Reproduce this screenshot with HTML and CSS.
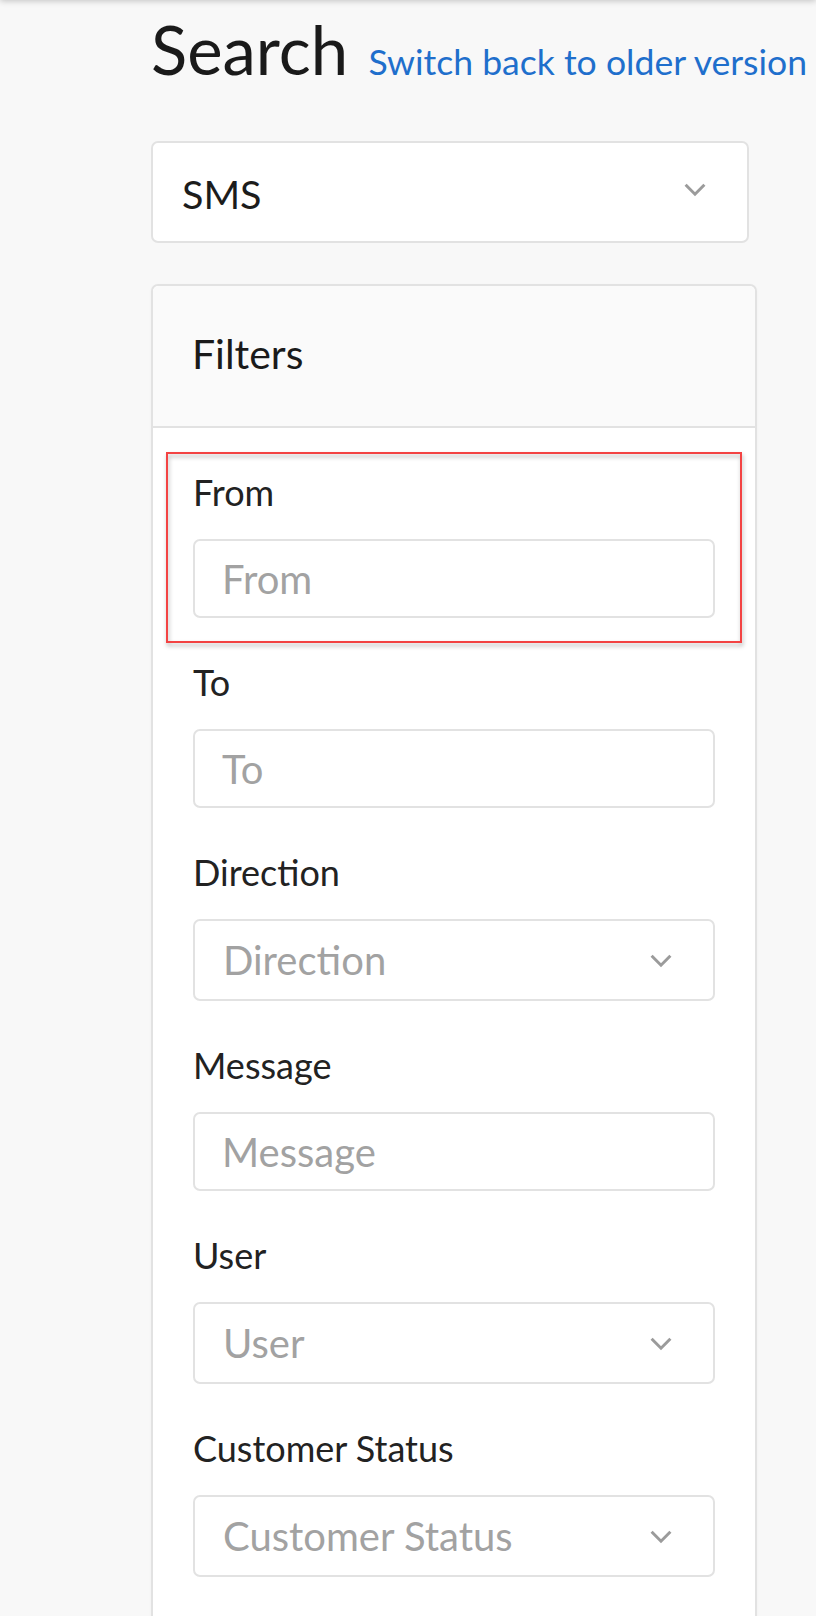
FILE: index.html
```html
<!DOCTYPE html>
<html lang="en">
<head>
<meta charset="utf-8">
<title>Search</title>
<link rel="stylesheet" href="styles.css">
</head>
<body>
<div class="topbar"></div>
<main class="page">
  <h1 class="title">Search <a class="switch-link" href="#">Switch back to older version</a></h1>

  <div class="type-select">
    <span class="type-value">SMS</span>
    <svg class="chevron" width="22" height="14" viewBox="0 0 22 14"><polyline points="1.6,1.8 11,11.2 20.4,1.8" fill="none" stroke="#9b9b9b" stroke-width="3"/></svg>
  </div>

  <section class="card">
    <div class="card-header">Filters</div>
    <div class="card-body">
      <div class="group">
        <div class="highlight"></div>
        <label class="label">From</label>
        <div class="input"><span class="placeholder">From</span></div>
      </div>
      <div class="group">
        <label class="label">To</label>
        <div class="input"><span class="placeholder">To</span></div>
      </div>
      <div class="group">
        <label class="label">Direction</label>
        <div class="select"><span class="placeholder">Direction</span>
          <svg class="chevron" width="22" height="14" viewBox="0 0 22 14"><polyline points="1.6,1.8 11,11.2 20.4,1.8" fill="none" stroke="#9b9b9b" stroke-width="3"/></svg>
        </div>
      </div>
      <div class="group">
        <label class="label">Message</label>
        <div class="input"><span class="placeholder">Message</span></div>
      </div>
      <div class="group">
        <label class="label">User</label>
        <div class="select"><span class="placeholder">User</span>
          <svg class="chevron" width="22" height="14" viewBox="0 0 22 14"><polyline points="1.6,1.8 11,11.2 20.4,1.8" fill="none" stroke="#9b9b9b" stroke-width="3"/></svg>
        </div>
      </div>
      <div class="group">
        <label class="label">Customer Status</label>
        <div class="select"><span class="placeholder">Customer Status</span>
          <svg class="chevron" width="22" height="14" viewBox="0 0 22 14"><polyline points="1.6,1.8 11,11.2 20.4,1.8" fill="none" stroke="#9b9b9b" stroke-width="3"/></svg>
        </div>
      </div>
    </div>
  </section>
</main>
</body>
</html>
```

FILE: styles.css
```css
html, body {
  margin: 0;
  padding: 0;
  background: #f8f8f8;
  font-family: Lato, "Open Sans", "Liberation Sans", sans-serif;
  color: #1e1e1e;
  overflow: hidden;
}

.topbar {
  height: 10px;
  margin-top: -10px;
  background: #fff;
  box-shadow: 0 1px 6px rgba(0, 0, 0, 0.22);
}

.page {
  padding: 9px 0 0 151px;
  width: 606px;
}

.title {
  margin: 0;
  font-size: 67px;
  font-weight: 400;
  line-height: 80px;
  color: #1a1a1a;
  white-space: nowrap;
}

.switch-link {
  font-size: 35.6px;
  line-height: 1;
  color: #1f6fcc;
  text-decoration: none;
  margin-left: 3px;
}

.type-select {
  margin-top: 52px;
  width: 598px;
  height: 102px;
  box-sizing: border-box;
  background: #fff;
  border: 2px solid #e2e2e2;
  border-radius: 7px;
  display: flex;
  align-items: center;
  justify-content: space-between;
  padding: 0 41px 0 29px;
}

.type-value {
  font-size: 39.5px;
  color: #1c1c1c;
  margin-top: 2px;
}

.type-select .chevron {
  margin-top: -5px;
}

.chevron {
  display: block;
  flex: none;
}

.card {
  margin-top: 41px;
  width: 606px;
  box-sizing: border-box;
  background: #fff;
  border: 2px solid #e2e2e2;
  border-radius: 7px;
  box-shadow: 0 1px 3px rgba(0, 0, 0, 0.04);
}

.card-header {
  background: #fafafa;
  border-bottom: 2px solid #e2e2e2;
  border-radius: 6px 6px 0 0;
  height: 142px;
  box-sizing: border-box;
  padding: 43px 40px 0 39px;
  font-size: 41px;
  line-height: 50px;
  color: #1a1a1a;
}

.card-body {
  padding: 41px 40px 120px 40px;
}

.group {
  position: relative;
  margin-bottom: 41px;
}

.label {
  display: block;
  font-size: 36px;
  line-height: 42px;
  padding-top: 2px;
  color: #222;
  margin-bottom: 26px;
}

.input,
.select {
  box-sizing: border-box;
  width: 522px;
  background: #fff;
  border: 2px solid #e2e2e2;
  border-radius: 7px;
  display: flex;
  align-items: center;
}

.input {
  height: 79px;
  padding: 0 20px 0 27px;
}

.select {
  height: 82px;
  padding: 0 41px 0 28px;
  justify-content: space-between;
}

.select .chevron {
  margin-top: 2px;
}

.placeholder {
  font-size: 40px;
  color: #a2a2a2;
}

.highlight {
  position: absolute;
  top: -17px;
  bottom: -25px;
  left: -27px;
  right: -27px;
  border: 2px solid #f34343;
  filter: drop-shadow(1px 3px 2px rgba(0, 0, 0, 0.3));
  pointer-events: none;
}
```
